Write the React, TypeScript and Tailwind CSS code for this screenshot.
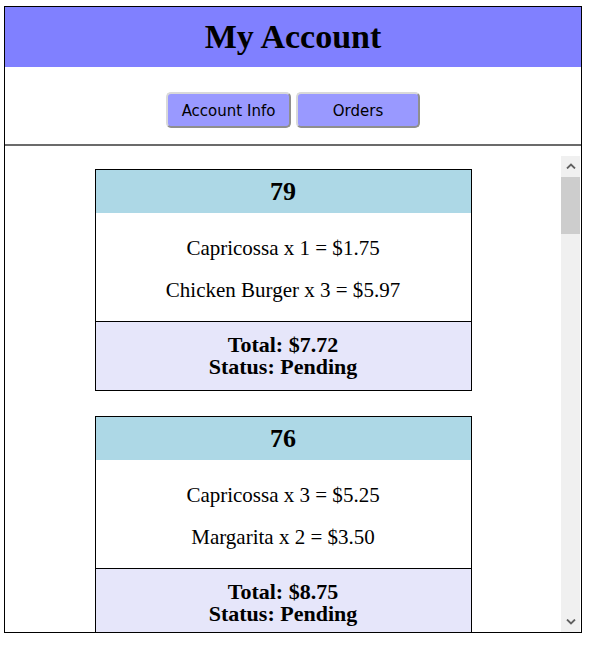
import React from 'react';

interface OrderItem {
    name: string;
    qty: number;
    price: number;
}

interface Order {
    id: number;
    items: OrderItem[];
    status: string;
}

const orders: Order[] = [
    { id: 79, items: [{ name: 'Capricossa', qty: 1, price: 1.75 }, { name: 'Chicken Burger', qty: 3, price: 5.97 }], status: 'Pending' },
    { id: 76, items: [{ name: 'Capricossa', qty: 3, price: 5.25 }, { name: 'Margarita', qty: 2, price: 3.5 }], status: 'Pending' },
    { id: 74, items: [{ name: 'Margarita', qty: 1, price: 1.75 }, { name: 'Chicken Burger', qty: 1, price: 1.99 }], status: 'Pending' },
    { id: 71, items: [{ name: 'Capricossa', qty: 2, price: 3.5 }, { name: 'Margarita', qty: 1, price: 1.75 }], status: 'Pending' },
    { id: 68, items: [{ name: 'Chicken Burger', qty: 2, price: 3.98 }, { name: 'Capricossa', qty: 1, price: 1.75 }], status: 'Pending' },
    { id: 65, items: [{ name: 'Margarita', qty: 4, price: 7.0 }, { name: 'Capricossa', qty: 1, price: 1.75 }], status: 'Pending' },
    { id: 61, items: [{ name: 'Capricossa', qty: 1, price: 1.75 }, { name: 'Chicken Burger', qty: 2, price: 3.98 }], status: 'Pending' },
    { id: 58, items: [{ name: 'Margarita', qty: 2, price: 3.5 }, { name: 'Chicken Burger', qty: 1, price: 1.99 }], status: 'Pending' },
];

const OrderCard: React.FC<{ order: Order }> = ({ order }) => {
    const total = order.items.reduce((sum, item) => sum + item.price, 0);
    return (
        <div className="mx-auto mb-[25px] w-[377px] border border-black text-center">
            <div className="bg-[#add8e6] py-[8px] text-[26px] leading-[27px] font-bold">{order.id}</div>
            <div className="flex flex-col gap-[19px] bg-white pt-[24px] pb-[19px] text-[21px] leading-[23px]">
                {order.items.map(item => (
                    <div key={item.name}>
                        {item.name} x {item.qty} = ${item.price.toFixed(2)}
                    </div>
                ))}
            </div>
            <div className="border-t border-black bg-[#e6e6fa] pt-[12px] pb-[12px] text-[22px] leading-[22px] font-bold">
                <div>Total: ${total.toFixed(2)}</div>
                <div>Status: {order.status}</div>
            </div>
        </div>
    );
};

// classic windows-style scrollbar, drawn since the headless browser hides native ones
const ScrollBar: React.FC = () => (
    <div className="flex w-[19px] shrink-0 flex-col bg-[#f0f0f0]">
        <div className="flex h-[20px] items-center justify-center">
            <svg width="10" height="6" viewBox="0 0 10 6">
                <path d="M1 5.5L5 1.5L9 5.5" fill="none" stroke="#606060" strokeWidth="1.8" />
            </svg>
        </div>
        <div className="flex-1 pt-[1px]">
            <div className="h-[57px] bg-[#cdcdcd]" />
        </div>
        <div className="flex h-[20px] items-center justify-center">
            <svg width="10" height="6" viewBox="0 0 10 6">
                <path d="M1 0.5L5 4.5L9 0.5" fill="none" stroke="#606060" strokeWidth="1.8" />
            </svg>
        </div>
    </div>
);

export default function App() {
    return (
        <div className="bg-white w-[592px] h-[645px] pt-[6px] pl-[4px] font-['Georgia','Liberation_Serif',serif] text-black">
            <div className="flex h-[627px] w-[578px] flex-col border border-black">
                <div className="flex h-[60px] items-center justify-center bg-[#8080ff]">
                    <h1 className="text-[34px] font-bold leading-none">My Account</h1>
                </div>

                <div className="flex h-[77px] items-start justify-center gap-[5px] pt-[25px] font-['Tahoma','DejaVu_Sans',sans-serif] text-[15px]">
                    <button className="h-[36px] w-[125px] rounded-[5px] border-2 border-t-[#d9d9d9] border-l-[#d9d9d9] border-r-[#8f8f8f] border-b-[#8f8f8f] bg-[#9999ff] pt-[2px]">
                        Account Info
                    </button>
                    <button className="h-[36px] w-[124px] rounded-[5px] border-2 border-t-[#d9d9d9] border-l-[#d9d9d9] border-r-[#8f8f8f] border-b-[#8f8f8f] bg-[#9999ff] pt-[2px]">
                        Orders
                    </button>
                </div>

                <div className="h-[2px] bg-[#6b6b6b]" />

                <div className="mt-[10px] flex min-h-0 flex-1 pr-[1px]">
                    <div className="min-h-0 flex-1 overflow-y-auto pt-[13px] [scrollbar-width:none]">
                        {orders.map(order => (
                            <OrderCard key={order.id} order={order} />
                        ))}
                    </div>
                    <ScrollBar />
                </div>
            </div>
        </div>
    );
}
